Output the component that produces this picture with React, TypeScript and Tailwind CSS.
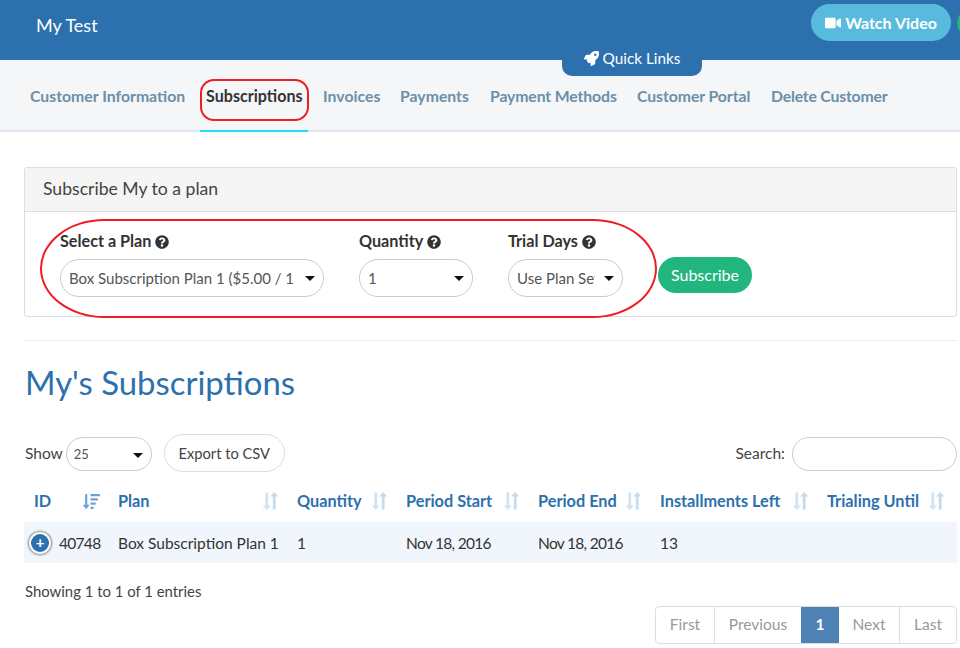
import React from "react";
import { FaVideo, FaRocket, FaQuestionCircle, FaSortAmountDown } from "react-icons/fa";

const tabs = [
  { t: "Customer Information", c: "w-[167px] text-[15.8px]" },
  { t: "Subscriptions", c: "w-[108px] text-[16.1px]" },
  { t: "Invoices", c: "w-[68px] text-[15.8px]" },
  { t: "Payments", c: "w-[81px] text-[15.8px]" },
  { t: "Payment Methods", c: "w-[138px] text-[15.8px] tracking-[-0.13px]" },
  { t: "Customer Portal", c: "w-[125px] text-[15.8px] tracking-[-0.07px]" },
  { t: "Delete Customer", c: "w-[128px] text-[15.8px] tracking-[-0.2px]" },
];

function Caret() {
  return <span className="h-0 w-0 shrink-0 border-x-[5px] border-t-[5px] border-x-transparent border-t-[#111]" />;
}

function PillSelect({ label, value, className, valueClass }: { label: string; value: string; className: string; valueClass?: string }) {
  return (
    <div className={className}>
      <div className="flex h-[21px] items-center gap-[4px] text-[16.2px] font-bold leading-none text-[#333]">
        {label}
        <FaQuestionCircle className="h-[14px] w-[14px]" />
      </div>
      <div className="mt-[7px] flex h-[38px] items-center justify-between rounded-full border border-[#ccc] bg-white pl-[8px] pr-[8px]">
        <span className={"overflow-hidden whitespace-nowrap text-[15px] text-[#555] " + (valueClass ?? "")}>{value}</span>
        <Caret />
      </div>
    </div>
  );
}

function SortIcon() {
  return (
    <svg width="17" height="20" viewBox="0 0 17 20" className="shrink-0">
      <path d="M3.4 1.5h2.8v13h2.7L4.8 19 .7 14.5h2.7z" fill="#d3e3f1" />
      <path d="M10.8 18.5h2.8v-13h2.7L12.2 1 8.100 5.500h2.700z" fill="#c6dbec" />
    </svg>
  );
}

const cols = [
  { t: "ID", active: true },
  { t: "Plan" },
  { t: "Quantity" },
  { t: "Period Start" },
  { t: "Period End" },
  { t: "Installments Left" },
  { t: "Trialing Until" },
];
const cells = ["", "Box Subscription Plan 1", "1", "Nov 18, 2016", "Nov 18, 2016", "13", ""];
const grid = "grid grid-cols-[88px_179px_109px_132px_122px_167px_136px]";

const pages = [
  { t: "First", w: "w-[58px]" },
  { t: "Previous", w: "w-[87px]" },
  { t: "1", w: "w-[38px]", on: true },
  { t: "Next", w: "w-[60px]" },
  { t: "Last", w: "w-[57px]" },
];

export default function App() {
  return (
    <div className="relative h-[648px] w-[960px] overflow-hidden bg-white text-[#333] [font-family:'Lato','Liberation_Sans',sans-serif]">
      <header className="flex h-[60px] items-start justify-between bg-[#2c71ae]">
        <div className="pl-[36px] pt-[13px] text-[18px] leading-[24px] text-white">My Test</div>
        <div className="flex items-center gap-[6px] pt-[4px]">
          <div className="flex h-[37px] w-[140px] items-center justify-center gap-[4px] rounded-full bg-[#58bbde] text-[16px] font-bold text-white">
            <FaVideo className="h-[16px] w-[16px]" />
            Watch Video
          </div>
          <div className="-mr-[25px] h-[28px] w-[28px] rounded-full bg-[#22b67f]" />
        </div>
      </header>

      <div className="absolute left-[562px] top-[45px] flex h-[31px] w-[140px] items-start justify-center gap-[4px] rounded-b-[10px] bg-[#2c71ae] pt-[3px] text-[15.3px] leading-[20px] text-white">
        <FaRocket className="mt-[3px] h-[15px] w-[15px]" />
        Quick Links
      </div>

      <nav className="flex h-[72px] items-stretch gap-[9px] border-b-2 border-[#dfe8f0] bg-[#f4f6f8] pl-[24px]">
        {tabs.map((tab, i) => (
          <div
            key={tab.t}
            className={
              "-mb-[2px] flex items-center whitespace-nowrap border-b-2 px-[6px] pt-[2px] font-bold " + tab.c + " " +
              (i === 1 ? "border-[#1fdcf0] text-[#333]" : "border-transparent text-[#6b8fa8]")
            }
          >
            {tab.t}
          </div>
        ))}
      </nav>

      <main className="px-[24px] pr-[3px]">
        <section className="mt-[35px] h-[150px] rounded-[3px] border border-[#ddd]">
          <div className="flex h-[44px] items-center border-b border-[#ddd] bg-[#f5f5f5] pl-[18px] text-[17.6px] text-[#444]">Subscribe My to a plan</div>
          <div className="flex items-start pl-[35px] pt-[19px]">
            <PillSelect label="Select a Plan" value="Box Subscription Plan 1 ($5.00 / 1" className="w-[264px]" />
            <PillSelect label="Quantity" value="1" className="ml-[35px] w-[114px]" />
            <PillSelect label="Trial Days" value="Use Plan Settings" className="ml-[35px] w-[115px]" valueClass="w-[78px]" />
            <div className="ml-[35px] mt-[26px] flex h-[36px] w-[94px] items-center justify-center rounded-full bg-[#22b67f] text-[16px] text-white">Subscribe</div>
          </div>
        </section>

        <hr className="mt-[23px] border-[#eee]" />

        <h1 className="ml-[1px] mt-[20px] text-[32.9px] font-normal leading-[44px] text-[#2c71ae]">My's Subscriptions</h1>

        <div className="mt-[29px] flex h-[40px] items-center justify-between">
          <div className="flex items-center pl-[1px]">
            <span className="text-[15.5px] text-[#444]">Show</span>
            <div className="ml-[3px] flex h-[34px] w-[86px] items-center justify-between rounded-full border border-[#ccc] pl-[7px] pr-[8px] pt-[2px] text-[13px] text-[#555]">
              25
              <Caret />
            </div>
            <div className="mb-[2px] ml-[12px] flex h-[38px] w-[121px] items-center justify-center rounded-full border border-[#ddd] text-[14.7px] text-[#444]">Export to CSV</div>
          </div>
          <div className="flex items-center gap-[7px]">
            <span className="text-[15.5px] text-[#444]">Search:</span>
            <div className="h-[34px] w-[165px] rounded-full border border-[#ccc]" />
          </div>
        </div>

        <div className={grid + " mt-[8px] h-[40px] items-center text-[#2c71ae]"}>
          {cols.map((c, i) => (
            <div key={c.t} className={"flex items-center justify-between pb-[2px] pr-[12px] text-[16.3px] font-bold " + (i === 0 ? "pl-[10px]" : "pl-[6px]")}>
              {c.t}
              {c.active ? <FaSortAmountDown className="h-[17px] w-[17px] text-[#6ba3d6]" /> : <SortIcon />}
            </div>
          ))}
        </div>

        <div className={grid + " h-[41px] items-center bg-[#f0f6fb] text-[15.5px] text-[#333]"}>
          {cells.map((c, i) =>
            i === 0 ? (
              <div key={i} className="flex items-center pl-[5px]">
                <span className="flex h-[22px] w-[22px] items-center justify-center rounded-full border-2 border-white bg-[#2c71ae] text-[15px] font-bold leading-none text-white shadow-[0_0_2px_1px_#888]">+</span>
                <span className="ml-[8px] pt-[2px] tracking-[-0.7px]">40748</span>
              </div>
            ) : (
              <div key={i} className={"whitespace-nowrap pl-[6px] pt-[2px] " + (i === 3 || i === 4 ? "tracking-[-0.7px]" : "")}>{c}</div>
            )
          )}
        </div>

        <div className="mt-[17px] pl-[1px] text-[14.9px] leading-[22px] text-[#444]">Showing 1 to 1 of 1 entries</div>

        <div className="mt-[4px] flex justify-end">
          <div className="flex h-[38px] overflow-hidden rounded-[4px] border border-[#ddd] text-[15.5px]">
            {pages.map((p, i) => (
              <div
                key={p.t}
                className={
                  "flex items-center justify-center " + p.w + " " +
                  (p.on ? "bg-[#4f82b4] font-bold text-white" : "text-[#999] ") +
                  (i > 0 && !p.on && !pages[i - 1].on ? " border-l border-[#ddd]" : "")
                }
              >
                {p.t}
              </div>
            ))}
          </div>
        </div>
      </main>

      {/* red annotations drawn over the page */}
      <div className="pointer-events-none absolute left-[200px] top-[79px] h-[42px] w-[109px] rounded-[14px] border-2 border-[#ee1c25]" />
      <div className="pointer-events-none absolute left-[40px] top-[219px] h-[99px] w-[617px] rounded-[65px/50px] border-2 border-[#ee1c25]" />
    </div>
  );
}
